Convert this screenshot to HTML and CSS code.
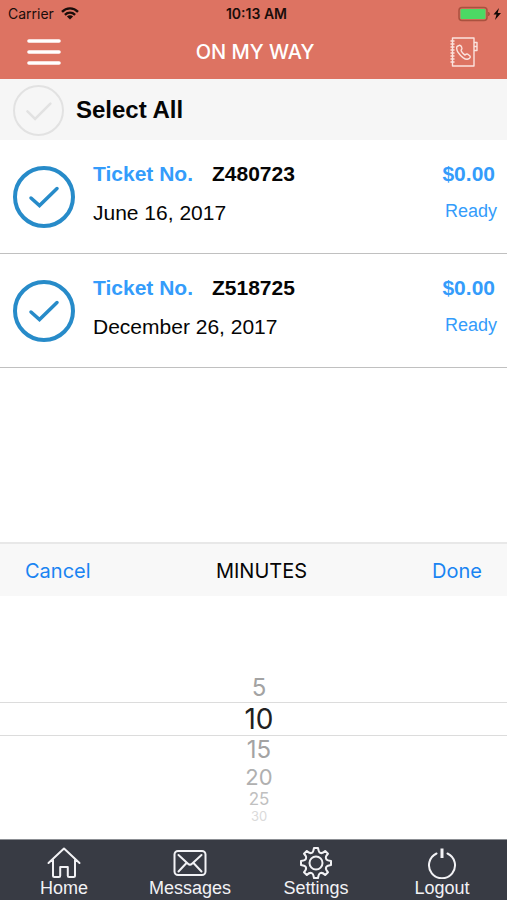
FILE: index.html
```html
<!DOCTYPE html>
<html lang="en">
<head>
<meta charset="utf-8">
<meta name="viewport" content="width=device-width, initial-scale=1">
<title>On My Way</title>
<link rel="stylesheet" href="styles.css">
</head>
<body>
<header class="header">
  <div class="status">
    <div class="carrier">
      <span>Carrier</span>
      <svg width="18" height="13" viewBox="0 0 18 13" fill="none" stroke="#1a0d0a" stroke-width="2.4" aria-hidden="true"><path d="M1 4.8C5.5.2 12.500.2 17 4.800M3.900 7.900c3-2.800 7.200-2.800 10.200 0"/><path d="M9 12.500 5.900 9.500c1.900-1.600 4.300-1.600 6.200 0z" fill="#1a0d0a" stroke="none"/></svg>
    </div>
    <span class="clock">10:13 AM</span>
    <div class="battery">
      <svg width="44" height="16" viewBox="0 0 44 16" aria-hidden="true"><rect x="1" y="1.500" width="28" height="13" rx="3" fill="none" stroke="#a9523f" stroke-width="1.500"/><rect x="2.500" y="3" width="25" height="10" rx="1" fill="#4cd964"/><path d="M30.500 6v4q2-2 0-4" fill="#a9523f" stroke="#a9523f"/><path d="M41 2 35.500 8.600h3L37 14l6-7h-3.300z" fill="#120805"/></svg>
    </div>
  </div>
  <div class="nav">
    <button class="icon-button" type="button" aria-label="Menu">
      <svg width="34" height="28" viewBox="0 0 34 28" stroke="#fff" stroke-width="3.600" stroke-linecap="round" aria-hidden="true"><path d="M2 3h30M2 14h30M2 25h30"/></svg>
    </button>
    <h1 class="title">ON MY WAY</h1>
    <button class="icon-button" type="button" aria-label="Contacts">
      <svg width="30" height="30" viewBox="0 0 30 30" fill="none" stroke="#fbe3de" stroke-width="1.400" stroke-linejoin="round" aria-hidden="true"><path d="M3.500 1H25v28H3.500zM25 5.500h3v8h-3M25 9.500h3"/><path d="M1.500 4h4M1.500 7h4M1.500 10h4M1.500 13h4M1.500 16h4M1.500 19h4M1.500 22h4M1.500 25h4"/><path d="M8 9.500 10.800 8.200Q12 8.300 12.700 10.200 13.600 12.200 12.100 13.200 12.300 15.400 16 18.100 17.800 16.400 19.200 17.500L21.200 19.200Q21.700 20.500 20 21.700 17.600 23.300 14 20.600 7.800 15.500 7.700 11.500 7.600 10.200 8 9.500z"/></svg>
    </button>
  </div>
</header>
<main class="content">
  <label class="select-all">
    <span class="tick tick-small"><input type="checkbox"><svg viewBox="0 0 60 60" aria-hidden="true"><path d="m17 31 9 9 18-18"/></svg></span>
    <span>Select All</span>
  </label>
  <ul class="tickets">
    <li>
      <label class="ticket">
        <span class="tick"><input type="checkbox" checked><svg viewBox="0 0 62 62" aria-hidden="true"><path d="m18 32 8.500 7.500L44 22.500"/></svg></span>
        <span class="details"><span class="number"><span class="accent">Ticket No.</span><span>Z480723</span></span><span class="date">June 16, 2017</span></span>
        <span class="summary"><span class="price">$0.00</span><span class="state">Ready</span></span>
      </label>
    </li>
    <li>
      <label class="ticket">
        <span class="tick"><input type="checkbox" checked><svg viewBox="0 0 62 62" aria-hidden="true"><path d="m18 32 8.500 7.500L44 22.500"/></svg></span>
        <span class="details"><span class="number"><span class="accent">Ticket No.</span><span>Z518725</span></span><span class="date">December 26, 2017</span></span>
        <span class="summary"><span class="price">$0.00</span><span class="state">Ready</span></span>
      </label>
    </li>
  </ul>
</main>
<section class="picker" aria-labelledby="picker-title">
  <div class="toolbar">
    <button type="button">Cancel</button>
    <h2 id="picker-title">MINUTES</h2>
    <button type="button">Done</button>
  </div>
  <div class="wheel" role="radiogroup" aria-labelledby="picker-title">
    <label class="option near"><input type="radio" name="minutes">5</label>
    <label class="option chosen"><input type="radio" name="minutes" checked>10</label>
    <label class="option near"><input type="radio" name="minutes">15</label>
    <label class="option mid"><input type="radio" name="minutes">20</label>
    <label class="option far"><input type="radio" name="minutes">25</label>
    <label class="option last"><input type="radio" name="minutes">30</label>
  </div>
</section>
<nav class="tabs">
  <a href="#home"><svg width="34" height="32" viewBox="0 0 34 32" aria-hidden="true"><path d="M1.500 16 17 1.500 32.500 16M6 13v15.500q0 1.500 1.500 1.500H12q1.200 0 1.200-1.200V20h7.600v8.800q0 1.200 1.200 1.200h4.500q1.500 0 1.500-1.500V13"/></svg>Home</a>
  <a href="#messages"><svg width="34" height="32" viewBox="0 0 34 32" aria-hidden="true"><rect x="1.500" y="4" width="31" height="24" rx="3.500"/><path d="m5.500 8 9.500 8.700q2 1.800 4 0L28.500 8M5.500 24.500l8-8.500M28.500 24.500l-8-8.500"/></svg>Messages</a>
  <a href="#settings"><svg width="34" height="32" viewBox="0 0 34 32" aria-hidden="true"><circle cx="17" cy="16" r="6.500"/><path d="M15 1h4q.7 4.300 2.200 4.900Q23.500 6.800 26.200 4l2.800 2.800Q26.200 9.500 27.100 11.800 27.700 13.300 32 14v4q-4.300.7-4.900 2.200-.9 2.300 1.900 5L26.200 28q-2.700-2.800-5-1.900Q19.700 26.700 19 31h-4q-.7-4.300-2.200-4.900-2.300-.9-5 1.900L5 25.200q2.800-2.700 1.900-5Q6.300 18.700 2 18v-4q4.300-.7 4.900-2.200.9-2.300-1.900-5L7.800 4q2.700 2.800 5 1.900Q14.300 5.300 15 1z"/></svg>Settings</a>
  <a href="#logout"><svg width="34" height="32" viewBox="0 0 34 32" aria-hidden="true"><path d="M11.500 6.500a13 13 0 1 0 11 0"/><path d="M17 1.500V11" stroke-width="3" stroke-linecap="butt"/></svg>Logout</a>
</nav>
</body>
</html>
```

FILE: styles.css
```css
* {
  box-sizing: border-box;
}

body {
  margin: 0;
  min-height: 100vh;
  display: flex;
  flex-direction: column;
  background: #fff;
  color: #050505;
  font-family: "Liberation Sans", Arial, sans-serif;
}

button {
  padding: 0;
  border: 0;
  background: none;
  color: inherit;
  font: inherit;
  cursor: pointer;
}

svg {
  display: block;
}

.header {
  background: #dd7362;
  font-family: Inter, sans-serif;
}

.status {
  display: grid;
  grid-template-columns: 1fr auto 1fr;
  align-items: center;
  height: 27px;
  padding: 0 5px 0 8px;
  color: #1a0d0a;
  font-size: 14px;
}

.carrier {
  display: flex;
  align-items: center;
  gap: 7px;
}

.clock {
  padding-left: 3px;
  font-weight: 600;
}

.battery {
  display: flex;
  justify-content: flex-end;
}

.nav {
  display: flex;
  align-items: center;
  justify-content: space-between;
  height: 52px;
  padding: 0 28px 2px 27px;
  color: #fff;
}

.title {
  margin: 0;
  font-size: 20px;
  font-weight: 500;
}

.select-all {
  display: flex;
  align-items: center;
  gap: 12px;
  height: 61px;
  padding: 1px 0 0 13px;
  background: #f6f6f6;
  font-size: 24px;
  font-weight: 700;
}

.tick {
  position: relative;
  flex: none;
  width: 62px;
  height: 62px;
}

.tick input {
  display: block;
  width: 100%;
  height: 100%;
  margin: 0;
  appearance: none;
  border: 4px solid #278bc9;
  border-radius: 50%;
}

.tick svg {
  position: absolute;
  inset: 0;
  fill: none;
  stroke: #278bc9;
  stroke-width: 3.5;
  stroke-linecap: round;
  pointer-events: none;
}

.tick-small {
  width: 51px;
  height: 51px;
}

.tick-small input {
  border: 2px solid #e2e2e2;
}

.tick-small svg {
  stroke: #e2e2e2;
  stroke-width: 3;
}

.tickets {
  margin: 0;
  padding: 0;
  list-style: none;
}

.ticket {
  display: flex;
  align-items: center;
  height: 114px;
  padding: 1px 10px 0 13px;
  border-bottom: 1px solid #c0c0c0;
  font-size: 21px;
  line-height: 24px;
}

.details,
.summary {
  display: flex;
  flex-direction: column;
}

.details {
  flex: 1;
  gap: 15px;
  margin-left: 18px;
  padding-bottom: 7px;
}

.number {
  display: flex;
  gap: 19px;
  font-weight: 700;
}

.accent,
.summary {
  color: #349cfb;
}

.summary {
  align-items: flex-end;
  gap: 13px;
  padding-bottom: 9px;
}

.price {
  padding-right: 2px;
  font-weight: 700;
}

.state {
  font-size: 18px;
}

.picker {
  margin-top: auto;
  font-family: Inter, sans-serif;
}

.toolbar {
  display: grid;
  grid-template-columns: 1fr auto 1fr;
  align-items: center;
  height: 54px;
  padding: 1px 25px 0;
  border-top: 2px solid #e8e8e8;
  background: #f8f8f8;
  font-size: 20px;
}

.toolbar button {
  justify-self: start;
  color: #1a84f2;
}

.toolbar button:last-child {
  justify-self: end;
}

.toolbar h2 {
  margin: 0;
  padding-left: 16px;
  font: inherit;
}

.wheel {
  display: flex;
  flex-direction: column;
  padding: 78px 0 15px;
}

.option {
  display: flex;
  align-items: center;
  justify-content: center;
  height: 28px;
  padding-left: 11px;
  color: #a3a3a3;
  font-size: 24px;
  line-height: 1;
}

.option input {
  position: absolute;
  opacity: 0;
}

.chosen {
  height: 34px;
  border: solid #dcdcdc;
  border-width: 1px 0;
  color: #202020;
  font-size: 28px;
}

.mid {
  height: 26px;
  color: #b0b0b0;
  font-size: 22px;
}

.far {
  height: 18px;
  color: #c0c0c0;
  font-size: 17px;
}

.last {
  height: 16px;
  color: #dadada;
  font-size: 13px;
}

.tabs {
  display: grid;
  grid-template-columns: repeat(4, 1fr);
  height: 61px;
  padding: 0 2px 0 1px;
  border-top: 1px solid #8c8f94;
  background: #383b44;
}

.tabs a {
  display: flex;
  flex-direction: column;
  align-items: center;
  padding-top: 7px;
  color: #f2f2f5;
  font-size: 18px;
  line-height: 19px;
  text-decoration: none;
}

.tabs svg {
  fill: none;
  stroke: #f2f2f5;
  stroke-width: 2;
  stroke-linecap: round;
  stroke-linejoin: round;
}
```
